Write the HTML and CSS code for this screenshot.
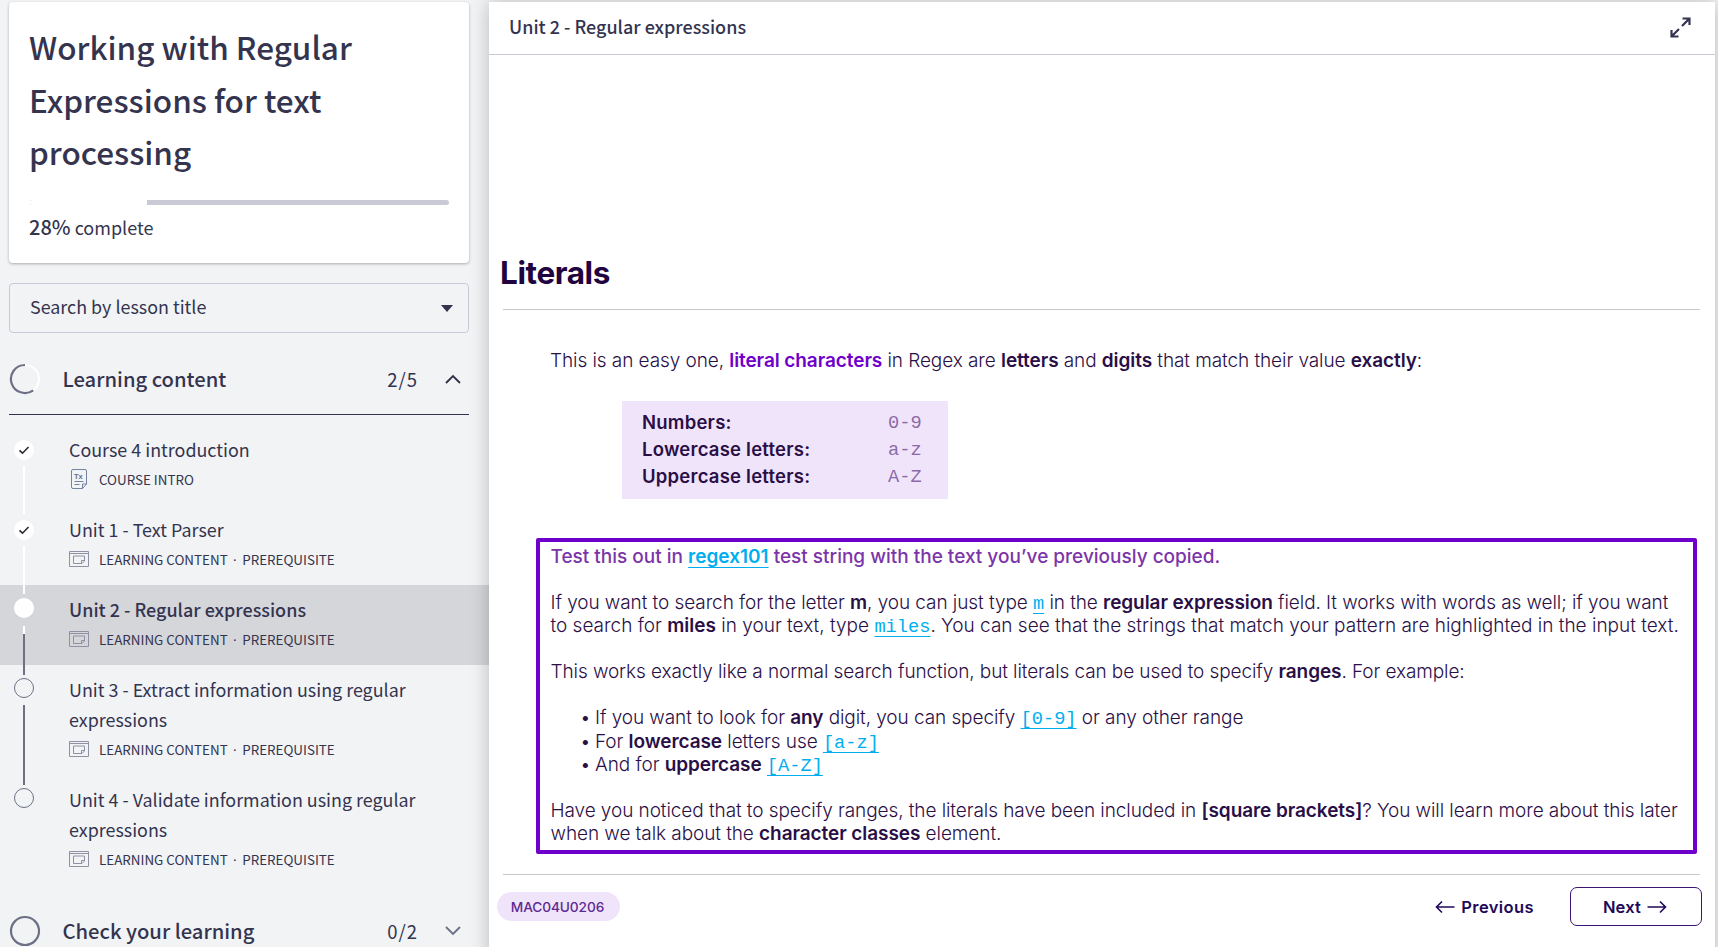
FILE: index.html
```html
<!DOCTYPE html>
<html lang="en">
<head>
<meta charset="utf-8">
<title>Working with Regular Expressions for text processing</title>
<link rel="stylesheet" href="styles.css">
</head>
<body>
<svg class="defs" width="0" height="0" aria-hidden="true">
  <symbol id="lesson" viewBox="0 0 20 16"><path d="M.5.5h19v15H.5zM.5 2.500h19M4.500 5h11v5l-2.500 2.500H4.500zM15.500 9.500H12.500v3" fill="none" stroke="#8f91a3"/></symbol>
  <symbol id="tick" viewBox="0 0 20 20"><circle cx="10" cy="10" r="10" fill="#fff"/><path d="M5.500 10.300l3 2.900 6-6.200" fill="none" stroke="#2b2b35" stroke-width="1.600"/></symbol>
</svg>
<div class="app">
  <aside class="sidebar">
    <section class="card">
      <h1 class="course">Working with Regular<br>Expressions for text<br>processing</h1>
      <div class="bar"><div class="bar-done" style="width:28%"></div></div>
      <p class="progress"><b>28%</b> complete</p>
    </section>
    <div class="select"><span>Search by lesson title</span><svg width="12" height="7" viewBox="0 0 12 7"><path d="M0 0h12L6 7z" fill="#34344f"/></svg></div>
    <div class="section first">
      <svg class="ring" width="32" height="32" viewBox="0 0 32 32"><circle cx="16" cy="16" r="14" fill="none" stroke="#fff" stroke-width="2"/><path d="M16 2A14 14 0 1 0 24.200 27.300" fill="none" stroke="#6d7085" stroke-width="2.200"/></svg>
      <h2>Learning content</h2><span class="count">2/5</span>
      <svg class="chev" width="16" height="10" viewBox="0 0 16 10"><path d="M1 9l7-7 7 7" fill="none" stroke="#2f2f48" stroke-width="1.800"/></svg>
    </div>
    <ul class="lessons">
      <li class="lesson l1"><svg class="dot" width="20" height="20"><use href="#tick"/></svg><i class="track"></i>
        <h3>Course 4 introduction</h3>
        <p class="meta"><svg width="20" height="20" viewBox="0 0 20 20"><path d="M4 .5h12q1.500 0 1.500 1.500v13l-4 4.500H4q-1.500 0-1.500-1.500V2Q2.500.5 4 .5zM17.500 15h-4v4.500M5.500 12.500h9M5.500 15.500h5" fill="none" stroke="#7483a0"/><text x="5" y="9.500" class="tx">Tx</text></svg><span>COURSE INTRO</span></p></li>
      <li class="lesson l2"><svg class="dot" width="20" height="20"><use href="#tick"/></svg><i class="track"></i>
        <h3>Unit 1 - Text Parser</h3>
        <p class="meta"><svg width="20" height="16"><use href="#lesson"/></svg><span>LEARNING CONTENT <i class="sep">·</i> PREREQUISITE</span></p></li>
      <li class="lesson l3 current"><i class="dot full"></i><i class="track"></i>
        <h3>Unit 2 - Regular expressions</h3>
        <p class="meta"><svg width="20" height="16"><use href="#lesson"/></svg><span>LEARNING CONTENT <i class="sep">·</i> PREREQUISITE</span></p></li>
      <li class="lesson l4"><i class="dot open"></i><i class="track"></i>
        <h3>Unit 3 - Extract information using regular<br>expressions</h3>
        <p class="meta"><svg width="20" height="16"><use href="#lesson"/></svg><span>LEARNING CONTENT <i class="sep">·</i> PREREQUISITE</span></p></li>
      <li class="lesson l5"><i class="dot open"></i>
        <h3>Unit 4 - Validate information using regular<br>expressions</h3>
        <p class="meta"><svg width="20" height="16"><use href="#lesson"/></svg><span>LEARNING CONTENT <i class="sep">·</i> PREREQUISITE</span></p></li>
    </ul>
    <div class="section">
      <svg class="ring" width="32" height="32" viewBox="0 0 32 32"><circle cx="16" cy="16" r="14" fill="none" stroke="#6d7085" stroke-width="2.200"/></svg>
      <h2>Check your learning</h2><span class="count">0/2</span>
      <svg class="chev" width="16" height="10" viewBox="0 0 16 10"><path d="M1 1l7 7 7-7" fill="none" stroke="#6d7085" stroke-width="1.800"/></svg>
    </div>
  </aside>
  <main class="viewer">
    <header class="top"><span>Unit 2 - Regular expressions</span>
      <svg width="21" height="21" viewBox="0 0 21 21"><path d="M12 9l7-7M12.500 1.500h7V8M9 12l-7 7M1.500 13v6.500H8.500" fill="none" stroke="#34344f" stroke-width="2.200"/></svg></header>
    <article class="page">
      <h2 class="heading">Literals</h2>
      <p class="intro">This is an easy one, <b class="violet">literal characters</b> in Regex are <b>letters</b> and <b>digits</b> that match their value <b>exactly</b>:</p>
      <dl class="table">
        <dt>Numbers:</dt><dd>0-9</dd>
        <dt>Lowercase letters:</dt><dd>a-z</dd>
        <dt>Uppercase letters:</dt><dd>A-Z</dd>
      </dl>
      <section class="box">
        <p class="lead">Test this out in <a>regex101</a> test string with the text you’ve previously copied.</p>
        <p>If you want to search for the letter <b>m</b>, you can just type <a class="code">m</a> in the <b>regular expression</b> field. It works with words as well; if you want<br><span class="wide">to search for <b>miles</b> in your text, type <a class="code">miles</a>. You can see that the strings that match your pattern are highlighted in the input text.</span></p>
        <p class="tight">This works exactly like a normal search function, but literals can be used to specify <b>ranges</b>. For example:</p>
        <ul class="list">
          <li>If you want to look for <b>any</b> digit, you can specify <a class="code">[0-9]</a> or any other range</li>
          <li>For <b>lowercase</b> letters use <a class="code">[a-z]</a></li>
          <li>And for <b>uppercase</b> <a class="code">[A-Z]</a></li>
        </ul>
        <p>Have you noticed that to specify ranges, the literals have been included in <b>[square brackets]</b>? You will learn more about this later<br>when we talk about the <b>character classes</b> element.</p>
      </section>
      <footer class="foot">
        <span class="pill">MAC04U0206</span>
        <span class="prev"><svg width="20" height="14" viewBox="0 0 20 14"><path d="M19.500 7H1.500M7 1.500L1.500 7 7 12.500" fill="none" stroke="#21085a" stroke-width="1.600"/></svg>Previous</span>
        <span class="next">Next<svg width="20" height="14" viewBox="0 0 20 14"><path d="M.5 7h18M13 1.500l5.500 5.500-5.500 5.500" fill="none" stroke="#21085a" stroke-width="1.600"/></svg></span>
      </footer>
    </article>
  </main>
</div>
</body>
</html>
```
FILE: styles.css
```css
*{box-sizing:border-box}
body{margin:0;background:#f1f3f5;height:947px;overflow:hidden;font-family:"Noto Sans CJK SC","Noto Sans",sans-serif;color:#34344f}
h1,h2,h3,p,ul,dl,dd{margin:0;padding:0}
li{list-style:none}
.defs{display:block;position:absolute}
.app{display:flex;height:947px}
.sidebar{width:489px;flex:none;white-space:nowrap}
.card{margin:2px 20px 20px 9px;height:261px;padding:18px 20px 0 21px;background:#fff;border-radius:4px;box-shadow:0 1px 3px rgba(0,0,0,.3)}
.course{font-size:31.500px;line-height:52.500px;font-weight:500;margin-left:-1px}
.bar{height:5px;margin-top:22px;background:#c9cad6;border-radius:3px;overflow:hidden}
.bar-done{height:5px;background:#fff}
.progress{margin:7px 0 0 -1px;font-size:18px;line-height:30px}
.progress b{font-size:20px;font-weight:500}
.select{margin:0 20px 0 9px;height:50px;border:1px solid #c7c9d6;border-radius:4px;padding:0 15px 3px 20px;display:flex;align-items:center;justify-content:space-between;font-size:17.900px}
.select span{margin-top:-1px}
.select svg{margin-top:3px}
.section{display:flex;align-items:center;margin:11px 20px 0 9px;height:70px;padding-right:8px}
.first{height:71px;border-bottom:1px solid #34344f;margin-bottom:10px}
.section h2{font-size:20.200px;font-weight:500;line-height:30px;margin-left:21.500px;flex:1}
.count{font-size:18.500px;letter-spacing:1px;margin-right:27px}
.lesson{position:relative;height:80px;padding:9px 0 0 69px}
.l4,.l5{height:110px}
.current{background:#d5d6da}
.lesson h3{font-size:17.900px;line-height:30px;font-weight:400}
.current h3{font-weight:500;font-size:17.980px}
.meta{display:flex;align-items:center;gap:10px;height:30px;font-size:13.400px}
.sep{display:inline-block;width:8.500px;text-align:center;font-family:"Noto Sans",sans-serif;font-style:normal}
.tx{font:bold 7.500px "Liberation Sans",sans-serif;fill:#66708c}
.dot{position:absolute;left:14px;top:15px}
.full,.open{top:13px;width:20px;height:20px;border-radius:50%;background:#fff}
.open{background:none;border:1px solid #6d7085}
.track{position:absolute;left:23px;top:41px;width:2px;height:48px;background:#fff;z-index:1}
.l3 .track{background:linear-gradient(#fff 8px,#6d7085 8px);height:49px}
.l4 .track{top:40px;height:80px;background:#6d7085}
.viewer{position:relative;width:1226px;flex:none;margin-top:2px;background:#fff;box-shadow:0 0 18px rgba(0,0,0,.24);height:960px}
.top{height:53px;border-bottom:1px solid #c7c9d6;display:flex;align-items:center;justify-content:space-between;padding:0 24px 2px 20px;font-size:17.980px;font-weight:500}
.top span{margin-top:-3px}
.page{font-family:Inter,sans-serif;font-weight:300;color:#2a0f47;padding:198px 15px 0 14px;white-space:nowrap}
.page b{font-weight:600}
.heading{font-size:31.500px;line-height:40px;font-weight:700;letter-spacing:-.4px;color:#210340;margin-left:-3px;height:56px}
.intro{border-top:1px solid #c9c6cc;padding:38px 0 0 47px;font-size:19px;line-height:26px;letter-spacing:-.08px}
.page .violet{color:#6f00cb}
.table{margin:27px 0 0 119px;width:326px;height:98px;background:#f0e4fb;padding:8px 20px 0 20px;display:grid;grid-template-columns:246px 1fr;line-height:27px;grid-auto-rows:27px}
.table dt{font-size:18.500px;font-weight:600;letter-spacing:.22px}
.table dd,.code{font-family:"Liberation Mono",monospace;font-weight:400;font-size:18.670px;letter-spacing:0}
.table dd{color:#8c6aa8;padding-top:1px}
.box{margin:39px 3px 20px 33px;height:316px;border:4px solid #6f00cb;border-radius:2px;padding:3px 0 0 10.500px;font-size:19px;line-height:23px;letter-spacing:-.075px}
.wide{letter-spacing:0}
.tight{letter-spacing:-.095px}
.box p{margin-bottom:23px}
.box a{color:#00aeef;text-decoration:underline;text-underline-offset:4px;line-height:20px}
.box .lead{font-weight:500;color:#7c35a8;letter-spacing:0}
.lead a{font-weight:600}
.list{margin:0 0 23px 44.500px}
.list li{position:relative}
.list li:first-child{height:24px}
.list li::before{content:"•";position:absolute;left:-15px}
.foot{border-top:1px solid #c9c6cc;display:flex;align-items:center;padding-top:12px;font-weight:600;color:#21085a;font-size:16.500px}
.pill{margin-left:-6px;width:123px;height:29px;border-radius:15px;background:#f0e4fb;font-size:13.700px;font-weight:500;letter-spacing:-.1px;color:#5d2a92;display:flex;align-items:center;justify-content:center;margin-right:auto;padding-right:2px}
.prev,.next{display:flex;align-items:center;gap:6px}
.prev{margin-right:36px;letter-spacing:.4px}
.next{width:132px;height:39px;border:1px solid #3b1370;border-radius:7px;justify-content:center;padding-right:2px;letter-spacing:.2px;margin-right:-2px}
```
